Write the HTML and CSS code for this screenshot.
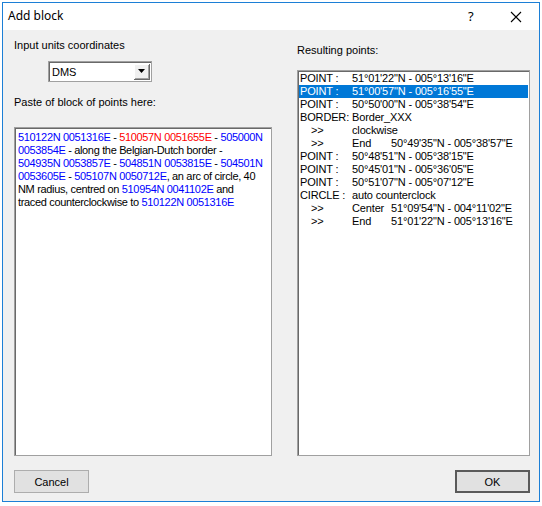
FILE: index.html
```html
<!DOCTYPE html>
<html>
<head>
<meta charset="utf-8">
<link rel="stylesheet" href="styles.css">
</head>
<body>
<div class="window">
  <div class="titlebar">
    <span class="title">Add block</span>
    <span class="help">?</span>
    <span class="close">
      <svg width="12" height="12" viewBox="0 0 12 12"><path d="M1 1 L11 11 M11 1 L1 11" stroke="#000" stroke-width="1.1" fill="none"/></svg>
    </span>
  </div>
  <div class="content">
    <div class="columns">
      <div class="left">
        <div class="label l1">Input units coordinates</div>
        <div class="combo">
          <span class="combo-text">DMS</span>
          <span class="combo-btn"><svg width="7" height="4" viewBox="0 0 7 4"><path d="M0 0 H7 L3.5 4 Z" fill="#000"/></svg></span>
        </div>
        <div class="label l2">Paste of block of points here:</div>
        <div class="textbox">
          <span class="b">510122N 0051316E</span> - <span class="r">510057N 0051655E</span> - <span class="b">505000N</span><br>
          <span class="b">0053854E</span> - along the Belgian-Dutch border -<br>
          <span class="b">504935N 0053857E</span> - <span class="b">504851N 0053815E</span> - <span class="b">504501N</span><br>
          <span class="b">0053605E</span> - <span class="b">505107N 0050712E</span>, an arc of circle, 40<br>
          NM radius, centred on <span class="b">510954N 0041102E</span> and<br>
          traced counterclockwise to <span class="b">510122N 0051316E</span>
        </div>
      </div>
      <div class="right">
        <div class="label l3">Resulting points:</div>
        <div class="listbox">
          <div class="row"><span class="c1">POINT :</span><span>51°01'22"N - 005°13'16"E</span></div>
          <div class="row sel"><span class="c1">POINT :</span><span>51°00'57"N - 005°16'55"E</span></div>
          <div class="row"><span class="c1">POINT :</span><span>50°50'00"N - 005°38'54"E</span></div>
          <div class="row"><span class="c1">BORDER:</span><span>Border_XXX</span></div>
          <div class="row"><span class="c1 ind">&gt;&gt;</span><span>clockwise</span></div>
          <div class="row"><span class="c1 ind">&gt;&gt;</span><span class="c2">End</span><span>50°49'35"N - 005°38'57"E</span></div>
          <div class="row"><span class="c1">POINT :</span><span>50°48'51"N - 005°38'15"E</span></div>
          <div class="row"><span class="c1">POINT :</span><span>50°45'01"N - 005°36'05"E</span></div>
          <div class="row"><span class="c1">POINT :</span><span>50°51'07"N - 005°07'12"E</span></div>
          <div class="row"><span class="c1">CIRCLE :</span><span>auto counterclock</span></div>
          <div class="row"><span class="c1 ind">&gt;&gt;</span><span class="c2">Center</span><span>51°09'54"N - 004°11'02"E</span></div>
          <div class="row"><span class="c1 ind">&gt;&gt;</span><span class="c2">End</span><span>51°01'22"N - 005°13'16"E</span></div>
        </div>
      </div>
    </div>
    <div class="buttons">
      <div class="btn">Cancel</div>
      <div class="btn default">OK</div>
    </div>
  </div>
</div>
</body>
</html>
```
FILE: styles.css
```css
html, body {
  margin: 0;
  padding: 0;
  background: #ffffff;
}
body {
  width: 542px;
  height: 506px;
  overflow: hidden;
  font-family: "Liberation Sans", Arial, sans-serif;
  font-size: 11px;
  color: #000;
}
.window {
  margin: 2px 0 0 2px;
  width: 536px;
  height: 498px;
  border: 1px solid #1c7fd6;
  background: #f0f0f0;
  display: flex;
  flex-direction: column;
}
.titlebar {
  height: 27px;
  background: #ffffff;
  display: flex;
  align-items: center;
}
.title {
  font-family: "Noto Sans", "Liberation Sans", sans-serif;
  font-size: 12px;
  margin-left: 5px;
  margin-top: -2px;
  flex: 1;
}
.help {
  font-family: "Noto Sans", "Liberation Sans", sans-serif;
  font-size: 13px;
  width: 14px;
  margin-right: 28px;
  margin-top: -2px;
}
.close {
  width: 12px;
  height: 12px;
  margin-right: 17px;
  display: flex;
}
.content {
  flex: 1;
  padding: 0 9px 0 11px;
  display: flex;
  flex-direction: column;
}
.columns {
  display: flex;
  gap: 25px;
}
.left {
  width: 258px;
  display: flex;
  flex-direction: column;
}
.right {
  width: 233px;
  display: flex;
  flex-direction: column;
}
.label {
  line-height: 13px;
  height: 13px;
  white-space: nowrap;
}
.l1 { margin-top: 9px; }
.l2 { margin-top: 14px; }
.l3 { margin-top: 14px; }
.combo {
  margin-top: 9px;
  margin-left: 34px;
  width: 102px;
  height: 19px;
  background: #fff;
  border: 1px solid #a0a0a0;
  box-shadow: inset 1px 1px 0 #696969;
  display: flex;
  align-items: center;
  justify-content: space-between;
}
.combo-text {
  margin-left: 3px;
}
.combo-btn {
  width: 16px;
  height: 16px;
  margin-right: 1px;
  background: #f0f0f0;
  border-right: 1px solid #696969;
  border-bottom: 1px solid #696969;
  box-sizing: border-box;
  box-shadow: inset 1px 1px 0 #fff, inset -1px -1px 0 #a0a0a0;
  display: flex;
  align-items: center;
  justify-content: center;
}
.textbox {
  margin-top: 18px;
  height: 324px;
  background: #fff;
  border: 1px solid #a0a0a0;
  box-shadow: inset 1px 1px 0 #696969;
  padding: 3px 0 0 3px;
  line-height: 13px;
  white-space: nowrap;
  overflow: hidden;
  letter-spacing: -0.34px;
}
.b { color: #0000ff; }
.r { color: #ff0000; }
.listbox {
  margin-top: 13px;
  height: 383px;
  background: #fff;
  border: 1px solid #a0a0a0;
  box-shadow: inset 1px 1px 0 #696969;
  padding: 1px 1px 0 1px;
  letter-spacing: -0.15px;
  overflow: hidden;
}
.row {
  height: 13px;
  line-height: 13px;
  display: flex;
  white-space: nowrap;
  padding-left: 1px;
}
.row span {
  flex-shrink: 0;
}
.row.sel {
  background: #0078d7;
  color: #fff;
}
.c1 {
  width: 52px;
}
.c1.ind {
  padding-left: 11px;
  width: 41px;
}
.c2 {
  width: 39px;
}
.buttons {
  margin-top: 14px;
  display: flex;
  justify-content: space-between;
}
.btn {
  box-sizing: border-box;
  width: 75px;
  height: 23px;
  background: #e1e1e1;
  border: 1px solid #adadad;
  display: flex;
  align-items: center;
  justify-content: center;
}
.btn.default {
  border: 2px solid #5a5a5a;
}
```
